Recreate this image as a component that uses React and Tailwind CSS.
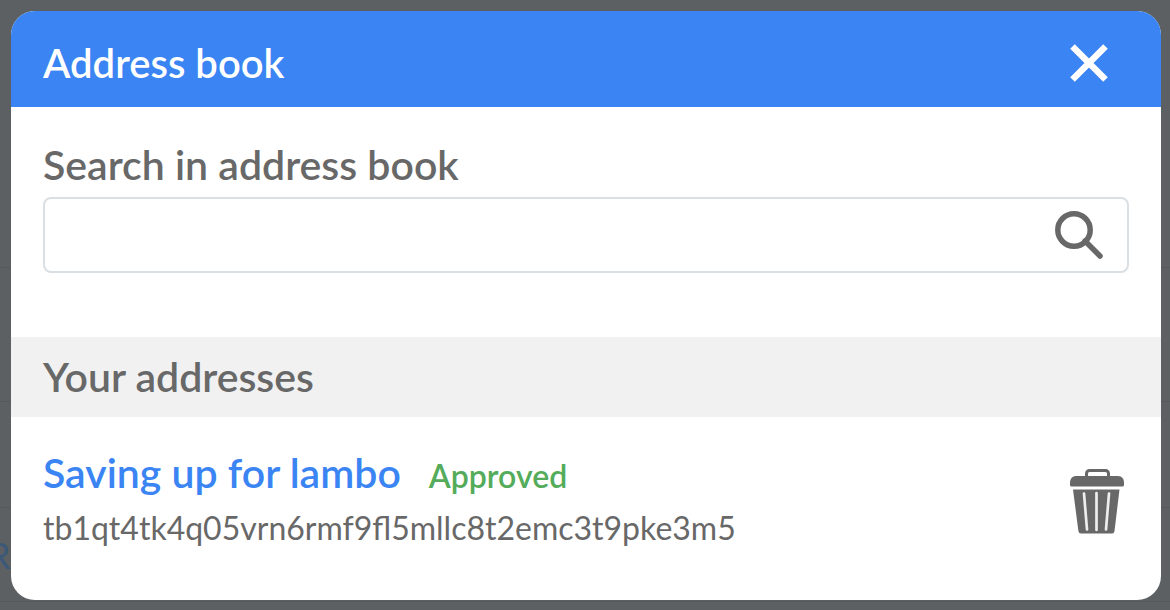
import React, { useState } from 'react'

const ADDRESSES = [
  { id: 1, name: 'Saving up for lambo', status: 'Approved', address: 'tb1qt4tk4q05vrn6rmf9fl5mllc8t2emc3t9pke3m5' },
]

function CloseIcon(){
  return (
    <svg viewBox="0 0 40 40" className="h-10 w-10" fill="none" stroke="currentColor" strokeWidth="6.500" aria-hidden="true">
      <path d="M3.500 3.500 36.500 36.500M36.500 3.500 3.500 36.500" />
    </svg>
  )
}

function SearchIcon(){
  return (
    <svg viewBox="0 0 50 50" className="h-[50px] w-[50px]" fill="none" stroke="currentColor" aria-hidden="true">
      <circle cx="20" cy="20" r="16.2" strokeWidth="5.5" />
      <path d="M31 31 46 46" strokeWidth="5.5" strokeLinecap="round" />
    </svg>
  )
}

function TrashIcon(){
  return (
    <svg viewBox="0 0 56 66" className="h-[66px] w-14" aria-hidden="true">
      <path d="M17.500 9V5.500a3 3 0 0 1 3-3h16a3 3 0 0 1 3 3V9" fill="none" stroke="currentColor" strokeWidth="3" />
      <path d="M7 8h42c4 0 6 3 6 7v2q0 1.500-1.500 1.500h-51Q1 18.500 1 17v-2c0-4 2-7 6-7Z" fill="currentColor" />
      <path d="M4 21.500h46.500L45.500 63q-.3 2.500-2.500 2.500H12Q9.800 65.500 9.400 63Z" fill="currentColor" />
      <path d="M15 25.500 18 61.500M27.500 25v37M40 25.500 37 61.500" fill="none" stroke="#eee" strokeWidth="2.700" strokeLinecap="round" />
    </svg>
  )
}

export default function App(){
  const [query, setQuery] = useState('')
  const [addresses, setAddresses] = useState(ADDRESSES)

  const q = query.trim().toLowerCase()
  const visible = addresses.filter(a => !q || a.name.toLowerCase().includes(q) || a.address.includes(q))

  const handleDelete = (id) => setAddresses(addresses.filter(a => a.id !== id))

  return (
    <div className="relative min-h-screen bg-[#5d6063] font-['Lato','Open_Sans',sans-serif] text-[#686868]">
      {/* dimmed page behind the dialog */}
      <div aria-hidden="true" className="absolute inset-0 flex flex-col overflow-hidden text-[#3b5878]">
        <div className="h-[268px] border-b border-[#56595c]" />
        <div className="h-[134px] border-b border-[#56595c]" />
        <div className="h-[106px] border-b border-[#56595c]" />
        <div className="-ml-3 flex h-[94px] items-center border-b border-[#56595c] text-4xl">R</div>
      </div>

      <div className="relative py-[11px] pr-[9px] pl-[11px]">
        <div role="dialog" aria-labelledby="dialog-title" className="overflow-hidden rounded-3xl bg-white">
          <div className="flex h-24 items-center justify-between bg-[#3a84f3] pr-[52px] pl-8 text-white">
            <h1 id="dialog-title" className="pt-2 text-[40px] leading-12 font-semibold">Address book</h1>
            <button type="button" aria-label="Close" className="pt-2"><CloseIcon /></button>
          </div>

          <div className="px-8 pt-[34px] pb-16">
            <label htmlFor="search" className="block pb-2 text-[41px] leading-12 font-semibold">Search in address book</label>
            <div className="flex h-[76px] items-center rounded-lg border-2 border-[#dadfe3] pr-[23px]">
              <input
                id="search"
                type="text"
                className="h-full min-w-0 flex-1 px-4 text-3xl outline-none"
                value={query}
                onChange={e=>setQuery(e.target.value)}
              />
              <button type="button" aria-label="Search"><SearchIcon /></button>
            </div>
          </div>

          <h2 className="flex h-20 items-center bg-[#f1f1f1] px-8 text-[41px] leading-12 font-semibold">Your addresses</h2>

          <ul>
            {visible.map(a => (
              <li key={a.id} className="flex items-center justify-between pt-8 pr-9 pb-12 pl-8">
                <div>
                  <div className="flex items-baseline gap-7">
                    <a href="#address" className="text-[41px] leading-12 font-semibold text-[#3a84f3]">{a.name}</a>
                    <span className="text-[32px] leading-12 font-semibold text-[#54ac5b]">{a.status}</span>
                  </div>
                  <p className="pt-1 text-[32px] leading-12">{a.address}</p>
                </div>
                <button type="button" aria-label={`Delete ${a.name}`} onClick={()=>handleDelete(a.id)}><TrashIcon /></button>
              </li>
            ))}
          </ul>
        </div>
      </div>
    </div>
  )
}
